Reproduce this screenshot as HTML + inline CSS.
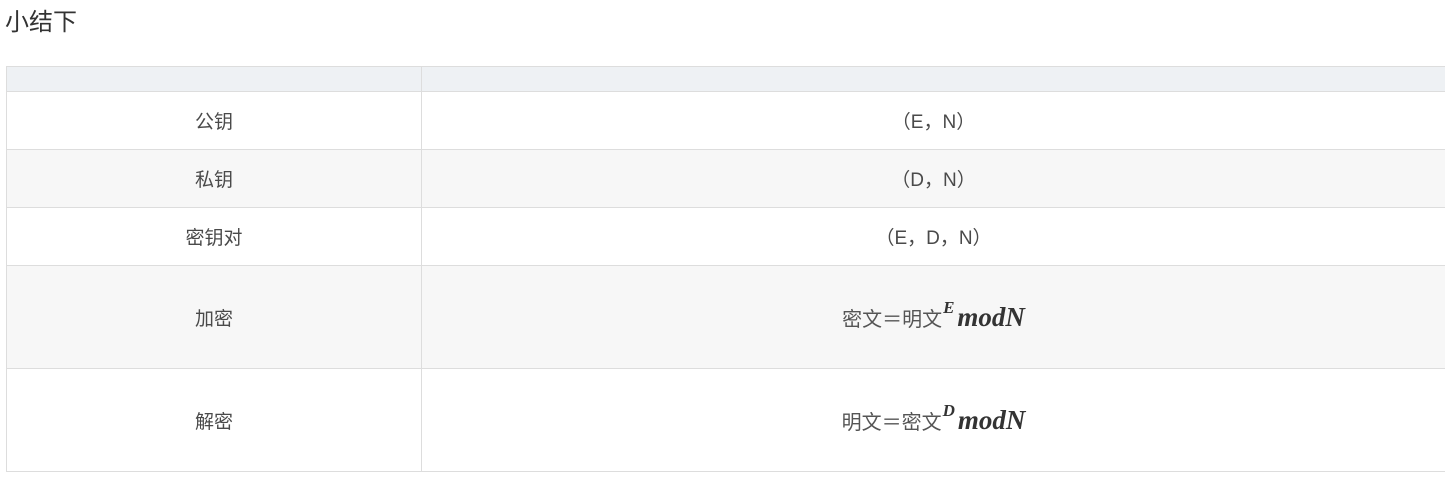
<!DOCTYPE html>
<html><head><meta charset="utf-8"><style>
body{margin:0;width:1445px;height:499px;background:#fff;font-family:"Liberation Sans","Noto Sans CJK SC",sans-serif;color:#4a4a4a;position:relative;overflow:hidden}
.t{position:absolute;left:5px;top:7px;font-size:24px;line-height:32px;color:#333}
.r{position:absolute;left:6px;width:1439px;border:1px solid #ddd;border-right:none;box-sizing:border-box;display:flex;font-size:19px}
.r div{display:flex;align-items:center;justify-content:center}
.a{width:414px;border-right:1px solid #ddd;height:100%}
.b{flex:1;height:100%}
.m{font-family:"Noto Sans CJK SC",sans-serif;font-size:20px;color:#555}
i{font-family:"Liberation Serif",serif;font-weight:bold;font-style:italic;font-size:27px;color:#333}
sup{font-family:"Liberation Serif",serif;font-style:italic;font-weight:bold;font-size:17px;position:relative;top:-5px;color:#333;margin:0 3px 0 1px}
</style></head><body>
<div class="t">小结下</div>
<div class="r" style="top:66px;height:26px;background:#eef1f4"><div class="a"></div><div class="b"></div></div>
<div class="r" style="top:91px;height:59px;border-top:none"><div class="a">公钥</div><div class="b">（E，N）</div></div>
<div class="r" style="top:149px;height:59px;background:#f7f7f7"><div class="a">私钥</div><div class="b">（D，N）</div></div>
<div class="r" style="top:207px;height:59px"><div class="a">密钥对</div><div class="b">（E，D，N）</div></div>
<div class="r" style="top:265px;height:104px;background:#f7f7f7"><div class="a">加密</div><div class="b"><span class="m">密文＝明文<sup>E</sup><i>modN</i></span></div></div>
<div class="r" style="top:368px;height:104px"><div class="a">解密</div><div class="b"><span class="m">明文＝密文<sup>D</sup><i>modN</i></span></div></div>
</body></html>
